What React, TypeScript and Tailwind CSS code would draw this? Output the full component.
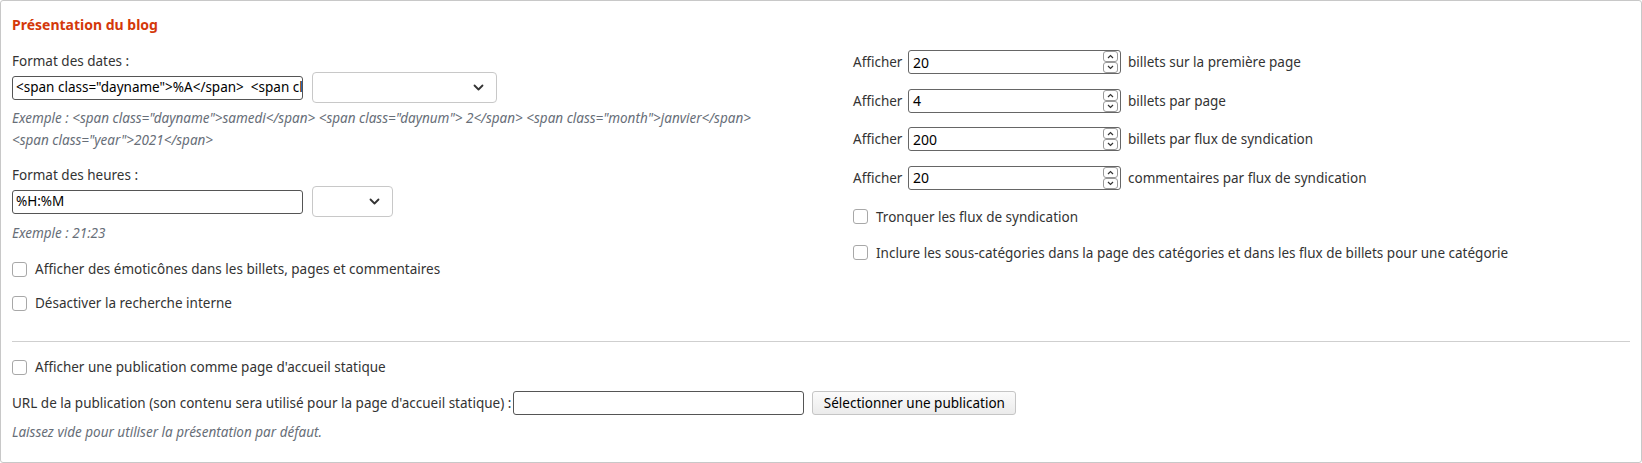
import React from "react";

function Chevron() {
  return (
    <svg width="11" height="7" viewBox="0 0 11 7" fill="none">
      <path d="M1.5 1.5l4 4 4-4" stroke="#333" strokeWidth="1.8" strokeLinecap="round" strokeLinejoin="round" />
    </svg>
  );
}

function Select({ width }: { width: string }) {
  return (
    <div className={`flex h-[31px] ${width} items-center justify-end rounded-[4px] border border-[#c8c8c8] bg-white pr-[12px]`}>
      <Chevron />
    </div>
  );
}

function Checkbox({ label }: { label: string }) {
  return (
    <label className="flex items-center gap-[8px] leading-[20px]">
      <span className="h-[15px] w-[15px] shrink-0 rounded-[3px] border border-[#a8a8a8] bg-white"></span>
      <span>{label}</span>
    </label>
  );
}

function Spinner() {
  return (
    <div className="flex h-[22px] w-[15px] flex-col">
      <div className="flex h-[11px] items-center justify-center rounded-[3px] border border-[#9a9a9a]">
        <svg width="7" height="5" viewBox="0 0 7 5" fill="none">
          <path d="M1 4l2.5-2.5L6 4" stroke="#333" strokeWidth="1.2" />
        </svg>
      </div>
      <div className="flex h-[11px] items-center justify-center rounded-[3px] border border-[#9a9a9a]">
        <svg width="7" height="5" viewBox="0 0 7 5" fill="none">
          <path d="M1 1l2.5 2.5L6 1" stroke="#333" strokeWidth="1.2" />
        </svg>
      </div>
    </div>
  );
}

function NumberRow({ value, label }: { value: string; label: string }) {
  return (
    <div className="flex h-[24px] items-center">
      <span className="w-[55px]">Afficher</span>
      <div className="flex h-[24px] w-[213px] items-center justify-between rounded-[3px] border border-[#666] bg-white pl-[4px] pr-[2px] text-black">
        <span className="text-[14px]">{value}</span>
        <Spinner />
      </div>
      <span className="ml-[7px]">{label}</span>
    </div>
  );
}

const rows = [
  { value: "20", label: "billets sur la première page" },
  { value: "4", label: "billets par page" },
  { value: "200", label: "billets par flux de syndication" },
  { value: "20", label: "commentaires par flux de syndication" },
];

export default function App() {
  return (
    <div className="h-[463px] w-[1642px] bg-white font-['Noto_Sans',sans-serif] text-[13.5px] text-[#333]">
      <div className="h-full rounded-[3px] border border-[#c8c8c8] px-[11px] pt-[14px]">
        <h3 className="text-[14px] font-bold leading-[20px] text-[#d4380a]">Présentation du blog</h3>

        <div className="mt-[15px] grid grid-cols-[841px_1fr]">
          <div>
            <p className="mt-px leading-[20px]">Format des dates :</p>
            <div className="mt-px flex h-[31px] items-center gap-[9px]">
              <div className="flex h-[24px] w-[291px] items-center overflow-hidden whitespace-nowrap rounded-[3px] border border-[#555] bg-white px-[3px] text-[13.5px] text-black">
                {'<span class="dayname">%A</span>\u00a0\u00a0<span class="daynum">%e</span>'}
              </div>
              <Select width="w-[185px]" />
            </div>
            <p className="mt-[4px] max-w-[770px] text-[13.5px] italic leading-[22px] text-[#676e78]">
              Exemple : &lt;span class="dayname"&gt;samedi&lt;/span&gt; &lt;span class="daynum"&gt; 2&lt;/span&gt; &lt;span class="month"&gt;janvier&lt;/span&gt; &lt;span class="year"&gt;2021&lt;/span&gt;
            </p>

            <p className="mt-[14px] leading-[20px]">Format des heures :</p>
            <div className="mt-px flex h-[31px] items-center gap-[9px]">
              <div className="flex h-[24px] w-[291px] items-center rounded-[3px] border border-[#555] bg-white px-[3px] text-[13.5px] text-black">
                %H:%M
              </div>
              <Select width="w-[81px]" />
            </div>
            <p className="mt-[5px] text-[13.5px] italic leading-[22px] text-[#676e78]">Exemple : 21:23</p>

            <div className="mt-[15px]">
              <Checkbox label="Afficher des émoticônes dans les billets, pages et commentaires" />
            </div>
            <div className="mt-[14px]">
              <Checkbox label="Désactiver la recherche interne" />
            </div>
          </div>

          <div>
            <div className="flex flex-col gap-[14.67px]">
              {rows.map((r, i) => (
                <NumberRow key={i} value={r.value} label={r.label} />
              ))}
            </div>
            <div className="mt-[17px]">
              <Checkbox label="Tronquer les flux de syndication" />
            </div>
            <div className="mt-[16px]">
              <Checkbox label="Inclure les sous-catégories dans la page des catégories et dans les flux de billets pour une catégorie" />
            </div>
          </div>
        </div>

        <div className="mt-[28px] border-t border-[#cfcfcf]"></div>

        <div className="mt-[15px]">
          <Checkbox label="Afficher une publication comme page d'accueil statique" />
        </div>
        <div className="mt-[13px] flex h-[26px] items-center">
          <span>URL de la publication (son contenu sera utilisé pour la page d'accueil statique) :</span>
          <div className="ml-[2px] h-[24px] w-[291px] rounded-[3px] border border-[#555] bg-white"></div>
          <button className="ml-[8px] h-[24px] w-[204px] rounded-[3px] border border-[#c5c5c5] bg-gradient-to-b from-[#fbfbfb] to-[#ebebeb] text-[13.5px] text-black">
            Sélectionner une publication
          </button>
        </div>
        <p className="mt-[5px] text-[13.5px] italic leading-[22px] text-[#676e78]">
          Laissez vide pour utiliser la présentation par défaut.
        </p>
      </div>
    </div>
  );
}
